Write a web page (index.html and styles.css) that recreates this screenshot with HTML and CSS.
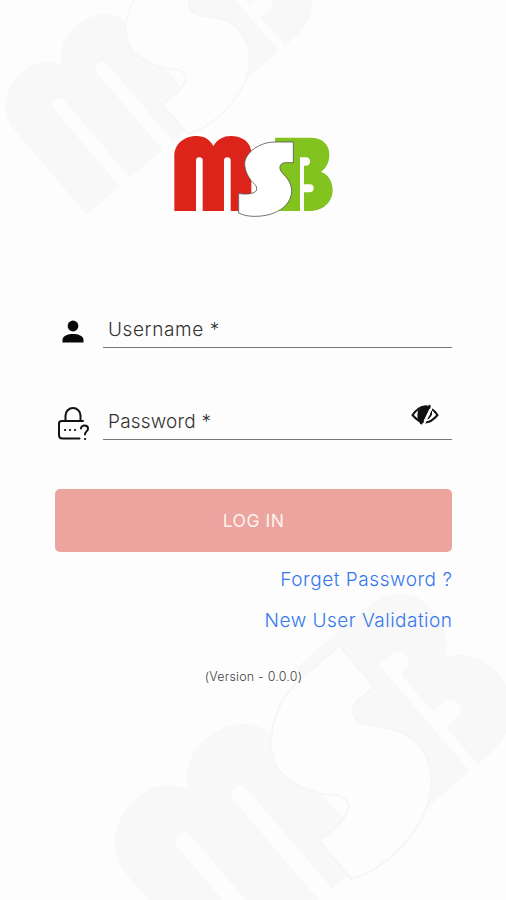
FILE: index.html
```
<!DOCTYPE html>
<html lang="en">
<head>
<meta charset="utf-8">
<title>MSB Login</title>
<link rel="stylesheet" href="styles.css">
</head>
<body>
<svg class="watermark" viewBox="0 0 506 900" aria-hidden="true">
  <defs>
    <g id="mark">
      <path class="m" d="M43 273V108C43 70 75 48 110 48C135 48 150 60 160 78C172 58 190 48 212 48C245 48 274 65 274 100V225H236V273H212V122Q212 112 202 112T192 122V273H128V122Q128 112 118 112T108 122V273Z"/>
      <path class="b" d="M345 53H450C490 53 508 75 508 105C508 130 495 148 483 155C505 163 518 185 518 210C518 245 490 273 450 273H432V217H449A12 12 0 0 0 449 193H432V137H438A12 12 0 0 0 438 112H420V273H350V150Z"/>
      <path class="s" d="M400 66V128H376C362 128 356 140 362 152C372 168 395 180 395 215C392 260 345 289 285 289C265 289 250 286 236 279V220C255 225 285 222 290 210C292 195 280 191 272 180C262 165 254 150 254 130C256 98 298 66 345 66Z"/>
    </g>
  </defs>
  <use href="#mark" transform="translate(55 100) rotate(-40.4) scale(.67) translate(-118 -112)"/>
  <use href="#mark" transform="translate(318 840) rotate(-40.5) scale(.87) translate(-236 -220)"/>
</svg>
<main class="login">
  <svg class="logo" viewBox="0 0 570 330" role="img" aria-label="MSB"><use href="#mark"/></svg>
  <form class="form">
    <div class="row">
      <svg class="icon" viewBox="0 0 36 36"><circle cx="18" cy="12" r="5.4"/><path d="M7.500 28.500V26C7.500 21.800 13 20 18 20S28.500 21.800 28.500 26V28.500Z"/></svg>
      <label class="field"><span class="username">Username *</span></label>
    </div>
    <div class="row second">
      <svg class="icon line" viewBox="0 0 36 36"><path d="M10.500 15V9.500a7.500 7.500 0 0 1 15 0V15M28 15H6.500Q4 15 4 17.500V29Q4 32.500 7.500 32.500H24.500"/><path class="dots" d="M10 24h.1M15 24h.1M20 24h.1M30 33h.1"/><path d="M26 22.500C26 18.600 33 18.600 33 22.700C33 25.500 30 25.300 30 28.500"/></svg>
      <label class="field"><span class="password">Password *</span>
        <svg class="eye" viewBox="0 0 30 24"><path d="M2.500 12Q15-5 27.500 12Q15 27 2.500 12Z"/><path class="iris" d="M9 8Q14 2 19 4L11 20Q7 15 9 8Z"/><path d="M20 2L11 21M21 8Q22 14 16 16"/><path class="gap" d="M22.500 3L13.500 22"/></svg>
      </label>
    </div>
    <button class="submit" type="button">LOG IN</button>
    <nav class="links"><a class="forget">Forget Password ?</a><a class="validation">New User Validation</a></nav>
    <p class="version">(Version - 0.0.0)</p>
  </form>
</main>
</body>
</html>
```
FILE: styles.css
```
* { box-sizing: border-box; }
body { margin: 0; height: 900px; overflow: hidden; background: #fdfdfd; color: #333; font-family: Inter, "Open Sans", sans-serif; font-weight: 300; }
.m { fill: var(--left, #dc241b); }
.b { fill: var(--right, #83c31f); }
.s { fill: var(--middle, #fff); stroke: var(--outline, #555); stroke-width: 2.5; }
.watermark { --left: #f8f8f8; --right: #f8f8f8; --middle: #fdfdfd; --outline: #f6f6f6; position: absolute; inset: 0; width: 506px; height: 900px; z-index: -1; }
.login { display: flex; flex-direction: column; padding: 120px 54px 0 55px; }
.logo { width: 190px; height: 110px; margin-left: 105px; }
.form { display: flex; flex-direction: column; padding-top: 83px; }
.row { display: flex; height: 35px; }
.row.second { margin-top: 57px; }
.icon { width: 36px; height: 36px; flex: none; fill: #080808; }
.row .icon { margin-top: 1px; }
.line { fill: none; stroke: #111; stroke-width: 2; stroke-linecap: round; stroke-linejoin: round; }
.dots { stroke-width: 2.2; }
.field { display: flex; justify-content: space-between; flex: 1; margin-left: 12px; padding: 0 12px 0 5px; border-bottom: 1px solid #777; font-size: 19px; line-height: 33px; white-space: nowrap; }
.username { letter-spacing: .6px; }
.password { letter-spacing: .2px; }
.eye { width: 30px; height: 24px; margin-top: -2px; fill: none; stroke: #111; stroke-width: 2; }
.eye .iris { fill: #111; }
.eye .gap { stroke: #fdfdfd; }
.submit { height: 63px; margin: 49px 0 0; padding: 0 0 1px; border: 0; border-radius: 5px; background: #eba49e; color: #fff3ef; font: 400 17.5px Inter, sans-serif; letter-spacing: .5px; }
.links { display: flex; flex-direction: column; align-items: flex-end; padding-top: 7px; color: #3478ed; font-size: 19px; font-weight: 350; line-height: 41px; }
.forget { letter-spacing: .55px; margin-right: -.55px; }
.validation { letter-spacing: .5px; margin-right: -.5px; }
.version { margin: 26px 0 0; text-align: center; font-size: 12.5px; line-height: 20px; letter-spacing: .2px; color: #444; }
```
